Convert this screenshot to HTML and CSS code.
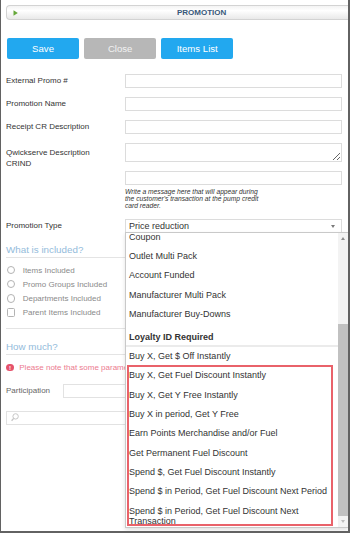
FILE: index.html
```html
<!DOCTYPE html>
<html lang="en">
<head>
    <meta charset="UTF-8">
    <meta name="viewport" content="width=device-width, initial-scale=1.0">
    <title>Promotion</title>
    <link rel="stylesheet" href="styles.css">
</head>
<body>
    <div class="frame">
        <div class="titlebar">
            <svg class="tb-icon" width="5" height="6" viewBox="0 0 5 6">
                <path d="M0.5 0.3 L4.8 3 L0.5 5.7 Z" fill="#66a83a"/>
            </svg>
            <span class="tb-title">PROMOTION</span>
        </div>

        <div class="toolbar">
            <button class="btn btn-blue">Save</button>
            <button class="btn btn-gray">Close</button>
            <button class="btn btn-blue">Items List</button>
        </div>

        <div class="form">
            <div class="row">
                <label>External Promo #</label>
                <input class="field" type="text">
            </div>
            <div class="row">
                <label>Promotion Name</label>
                <input class="field" type="text">
            </div>
            <div class="row">
                <label>Receipt CR Description</label>
                <input class="field" type="text">
            </div>
            <div class="row">
                <label>Qwickserve Description</label>
                <textarea class="field field-area"></textarea>
            </div>
            <div class="row row-top">
                <label class="lbl-crind">CRIND</label>
                <div>
                    <input class="field" type="text">
                    <p class="hint">Write a message here that will appear during the customer's transaction at the pump credit card reader.</p>
                </div>
            </div>
            <div class="row">
                <label>Promotion Type</label>
                <div class="select">
                    <span>Price reduction</span>
                    <span class="caret"></span>

                    <div class="dropdown">
                        <div class="dd-list">
                            <div class="dd-inner">
                                <div class="dd-item">Coupon</div>
                                <div class="dd-item">Outlet Multi Pack</div>
                                <div class="dd-item">Account Funded</div>
                                <div class="dd-item">Manufacturer Multi Pack</div>
                                <div class="dd-item">Manufacturer Buy-Downs</div>
                                <div class="dd-group">Loyalty ID Required</div>
                                <div class="dd-item">Buy X, Get $ Off Instantly</div>
                                <div class="dd-item">Buy X, Get Fuel Discount Instantly</div>
                                <div class="dd-item">Buy X, Get Y Free Instantly</div>
                                <div class="dd-item">Buy X in period, Get Y Free</div>
                                <div class="dd-item">Earn Points Merchandise and/or Fuel</div>
                                <div class="dd-item">Get Permanent Fuel Discount</div>
                                <div class="dd-item">Spend $, Get Fuel Discount Instantly</div>
                                <div class="dd-item">Spend $ in Period, Get Fuel Discount Next Period</div>
                                <div class="dd-item">Spend $ in Period, Get Fuel Discount Next Transaction</div>
                            </div>
                            <div class="highlight"></div>
                        </div>
                        <div class="dd-scroll">
                            <div class="sb-btn"><span class="sb-up"></span></div>
                            <div class="sb-track"><div class="sb-thumb"></div></div>
                            <div class="sb-btn"><span class="sb-down"></span></div>
                        </div>
                    </div>
                </div>
            </div>
        </div>

        <h4 class="section-title">What is included?</h4>
        <div class="options">
            <div class="option"><span class="radio"></span>Items Included</div>
            <div class="option"><span class="radio"></span>Promo Groups Included</div>
            <div class="option"><span class="radio"></span>Departments Included</div>
            <div class="option"><span class="radio check"></span>Parent Items Included</div>
        </div>

        <h4 class="section-title section-how">How much?</h4>
        <div class="notice">
            <span class="notice-icon">!</span>
            Please note that some parameters cannot be changed once the promotion is saved.
        </div>

        <div class="participation">
            <label>Participation</label>
            <input class="field" type="text">
        </div>

        <div class="search">
            <svg width="8" height="9" viewBox="0 0 8 9">
                <circle cx="4.6" cy="3.4" r="2.7" fill="none" stroke="#c6c6c6" stroke-width="1"/>
                <line x1="2.7" y1="5.4" x2="0.6" y2="7.8" stroke="#c6c6c6" stroke-width="1.3"/>
            </svg>
        </div>
    </div>
</body>
</html>
```

FILE: styles.css
```css
* {
    margin: 0;
    padding: 0;
    box-sizing: border-box;
}

body {
    font-family: "Liberation Sans", Arial, sans-serif;
    background: #fff;
    color: #333;
}

.frame {
    width: 350px;
    height: 533px;
    padding: 5px 6px 0 5px;
    border-left: 1px solid #626262;
    border-right: 2px solid #626262;
    border-bottom: 2px solid #626262;
    overflow: hidden;
    background: #fff;
}

/* title bar */
.titlebar {
    display: flex;
    align-items: center;
    height: 15px;
    margin-right: -6px;
    padding-left: 6px;
    border: 1px solid #d3d3d3;
    border-right: none;
    border-radius: 4px 0 0 4px;
    background: linear-gradient(#f3f3f3, #fff 35%, #e9e9e9);
}

.tb-icon {
    display: block;
}

.tb-title {
    margin-left: 159px;
    font-size: 8px;
    font-weight: bold;
    color: #38587a;
}

/* buttons */
.toolbar {
    display: flex;
    gap: 5.6px;
    margin-top: 17.7px;
    padding-left: 1.3px;
}

.btn {
    width: 71.5px;
    height: 21px;
    border: none;
    border-radius: 2px;
    font-family: inherit;
    font-size: 9.6px;
    color: #fff;
}

.btn-blue {
    background: #22a8ef;
}

.btn-gray {
    background: #b7b7b7;
    color: #f2f2f2;
}

/* form rows */
.form {
    margin-top: 15.3px;
}

.row {
    display: grid;
    grid-template-columns: 119px 217px;
    align-items: center;
    margin-bottom: 8.5px;
}

.row:last-child {
    margin-bottom: 0;
}

.row label {
    font-size: 8px;
    line-height: 10px;
    color: #333;
}

.row-top {
    align-items: start;
}

.lbl-crind {
    margin-top: -12px;
}

.field {
    display: block;
    width: 100%;
    height: 14.5px;
    border: 1px solid #dcdcdc;
    background: #fff;
    font-family: inherit;
}

.field-area {
    height: 19.5px;
    resize: vertical;
}

.hint {
    width: 138px;
    margin: 2.5px 0 1.5px;
    font-size: 6.7px;
    line-height: 7px;
    font-style: italic;
    color: #333;
}

/* select + open list */
.select {
    position: relative;
    display: flex;
    align-items: center;
    height: 14.3px;
    padding: 0 6px 0 3px;
    border: 1px solid #dcdcdc;
    font-size: 9px;
}

.caret {
    margin-left: auto;
    border-left: 2.5px solid transparent;
    border-right: 2.5px solid transparent;
    border-top: 3px solid #7a7a7a;
}

.dropdown {
    position: absolute;
    top: 100%;
    left: -1px;
    z-index: 5;
    display: flex;
    width: 223px;
    height: 296px;
    border: 1px solid #c9c9c9;
    border-right: none;
    background: #fff;
    box-shadow: 0 2px 4px rgba(0, 0, 0, 0.12);
}

.dd-list {
    position: relative;
    flex: 1;
    overflow: hidden;
}

.dd-inner {
    margin-top: -5.8px;
}

.dd-item {
    padding: 4.33px 4px 4.33px 3px;
    font-size: 9px;
    line-height: 10.67px;
    color: #333;
}

.dd-group {
    padding: 8.3px 3px 1.7px;
    border-bottom: 2.7px solid #ebebeb;
    font-size: 9px;
    line-height: 10.67px;
    font-weight: bold;
    color: #333;
}

.highlight {
    position: absolute;
    left: 0.7px;
    top: 131.4px;
    width: 206.3px;
    height: 161.3px;
    border: 2px solid #e9626a;
}

.dd-scroll {
    display: flex;
    flex-direction: column;
    align-items: center;
    width: 10px;
    background: #f3f3f3;
}

.sb-btn {
    display: flex;
    align-items: center;
    justify-content: center;
    width: 100%;
    height: 11px;
}

.sb-btn:last-child {
    height: 12px;
}

.sb-up {
    border-left: 2.5px solid transparent;
    border-right: 2.5px solid transparent;
    border-bottom: 3px solid #8c8c8c;
}

.sb-down {
    border-left: 2.5px solid transparent;
    border-right: 2.5px solid transparent;
    border-top: 3px solid #bdbdbd;
}

.sb-track {
    flex: 1;
    width: 100%;
}

.sb-thumb {
    width: 100%;
    height: 191.3px;
    margin-top: 80.4px;
    background: #c1c1c1;
}

/* sections */
.section-title {
    margin-top: 11px;
    padding-bottom: 1px;
    border-bottom: 1px solid #e4e4e4;
    font-size: 9.8px;
    line-height: 12px;
    font-weight: normal;
    color: #93bbdb;
}

.section-how {
    margin-top: 12px;
    padding-bottom: 1.6px;
}

.options {
    padding: 4.7px 0 7.9px 0.7px;
    border-bottom: 1px solid #e4e4e4;
}

.option {
    display: flex;
    align-items: center;
    gap: 7.7px;
    height: 14.2px;
    font-size: 8px;
    color: #8a8a8a;
}

.radio {
    width: 8.3px;
    height: 8.3px;
    border: 1px solid #b3b3b3;
    border-radius: 50%;
}

.radio.check {
    border-radius: 1.5px;
}

.notice {
    display: flex;
    align-items: center;
    gap: 5.6px;
    margin-top: 7.4px;
    padding-left: 0.3px;
    font-size: 8px;
    line-height: 10px;
    color: #ec7b8f;
    white-space: nowrap;
}

.notice-icon {
    display: flex;
    align-items: center;
    justify-content: center;
    width: 7.4px;
    height: 7.4px;
    border-radius: 50%;
    background: #e5526b;
    color: #fff;
    font-size: 6px;
    font-weight: bold;
}

.participation {
    display: flex;
    align-items: center;
    margin-top: 11px;
}

.participation label {
    width: 57.3px;
    font-size: 8px;
    color: #666;
}

.participation .field {
    flex: 1;
    height: 14px;
    border-color: #e2e2e2;
}

.search {
    display: flex;
    align-items: center;
    height: 14.3px;
    margin-top: 13px;
    padding-left: 4px;
    border: 1px solid #e2e2e2;
}
```
